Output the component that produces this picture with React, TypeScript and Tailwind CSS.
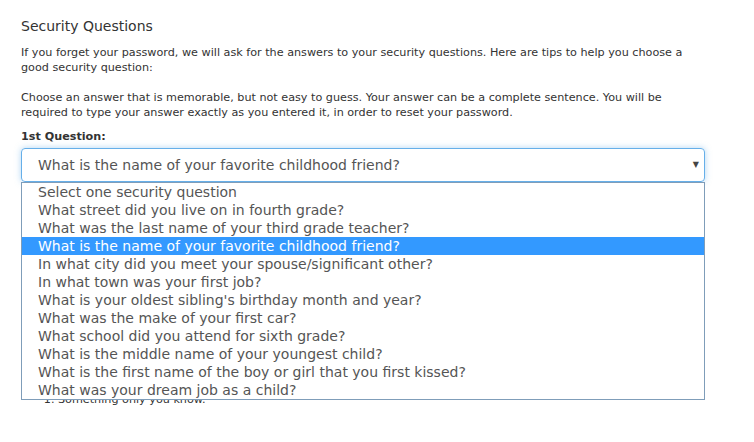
import React from "react";

const options = [
  "Select one security question",
  "What street did you live on in fourth grade?",
  "What was the last name of your third grade teacher?",
  "What is the name of your favorite childhood friend?",
  "In what city did you meet your spouse/significant other?",
  "In what town was your first job?",
  "What is your oldest sibling's birthday month and year?",
  "What was the make of your first car?",
  "What school did you attend for sixth grade?",
  "What is the middle name of your youngest child?",
  "What is the first name of the boy or girl that you first kissed?",
  "What was your dream job as a child?",
];

export default function App() {
  return (
    <div
      className="w-[754px] h-[442px] bg-white overflow-hidden text-[#333]"
      style={{ fontFamily: '"DejaVu Sans", Verdana, sans-serif' }}
    >
      <div className="pl-[21px] pt-[16px] w-[705px]">
        <h2 className="text-[14px] leading-[20px] text-[#333]">Security Questions</h2>
        <p className="mt-[9px] text-[11.2px] leading-[15px]">
          If you forget your password, we will ask for the answers to your security questions. Here are tips to help you choose a good security question:
        </p>
        <p className="mt-[15px] text-[11.2px] leading-[15px]">
          Choose an answer that is memorable, but not easy to guess. Your answer can be a complete sentence. You will be required to type your answer exactly as you entered it, in order to reset your password.
        </p>
        <div className="mt-[9px] text-[11.2px] leading-[15px] font-bold">1st Question:</div>
        <div className="relative mt-[4px] w-[684px]">
          <div className="h-[34px] rounded-[4px] border border-[#66afe9] shadow-[0_0_6px_rgba(102,175,233,0.5)] flex items-center pl-[16px] pr-[5px] text-[14px] text-[#555]">
            <span className="flex-1">What is the name of your favorite childhood friend?</span>
            <span className="text-[8px] text-[#444]">▼</span>
          </div>
          <ol className="mt-[210px] ml-[37px] text-[11.2px] leading-[15px] list-decimal">
            <li>Something only you know.</li>
          </ol>
          <div className="absolute left-0 top-[34px] w-[684px] bg-white border border-[#7f9db9] z-10">
            {options.map((o, i) => (
              <div
                key={i}
                className={
                  "h-[18px] leading-[18px] pl-[16px] text-[14px] whitespace-nowrap " +
                  (i === 3 ? "bg-[#3399ff] text-white" : "text-[#555]")
                }
              >
                {o}
              </div>
            ))}
          </div>
        </div>
      </div>
    </div>
  );
}
